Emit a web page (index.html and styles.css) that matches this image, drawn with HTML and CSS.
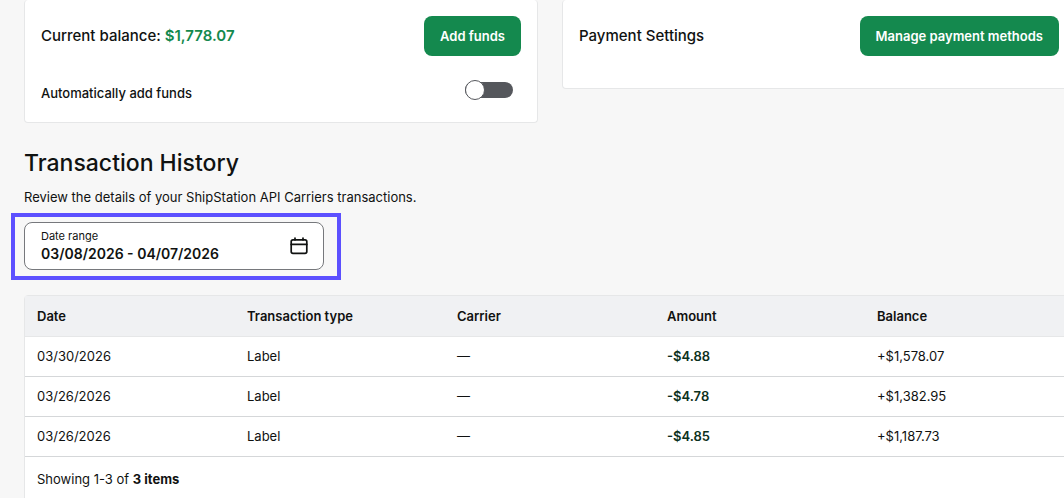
FILE: index.html
```
<!DOCTYPE html>
<html lang="en">
<head>
	<meta charset="UTF-8">
	<meta name="viewport" content="width=device-width, initial-scale=1">
	<title>Transaction History</title>
	<link rel="stylesheet" href="styles.css">
</head>
<body>
	<main class="page">
		<div class="cards">
			<section class="card">
				<div class="card-row">
					<h2 class="card-title">Current balance: <span class="balance">$1,778.07</span></h2>
					<button type="button" class="btn">Add funds</button>
				</div>
				<div class="card-row auto-row">
					<label for="auto-funds" class="auto-label">Automatically add funds</label>
					<input type="checkbox" id="auto-funds" class="switch" role="switch">
				</div>
			</section>
			<section class="card card-payment">
				<div class="card-row">
					<h2 class="card-title">Payment Settings</h2>
					<button type="button" class="btn">Manage payment methods</button>
				</div>
			</section>
		</div>

		<h1 class="title">Transaction History</h1>
		<p class="intro">Review the details of your ShipStation API Carriers transactions.</p>

		<div class="highlight">
			<div class="date-field">
				<div class="date-text">
					<label for="date-range">Date range</label>
					<input type="text" id="date-range" value="03/08/2026 - 04/07/2026">
				</div>
				<button type="button" class="date-btn" aria-label="Open calendar">
					<svg width="18" height="18" viewBox="0 0 18 18" fill="none" stroke="currentColor" stroke-width="1.7" stroke-linecap="round">
						<rect x="1.2" y="2.8" width="15.6" height="13.6" rx="1.8"/>
						<path d="M1.2 7.4h15.6M5 1v1.8M13 1v1.8"/>
					</svg>
				</button>
			</div>
		</div>

		<div class="table-box">
			<table class="history">
				<thead>
					<tr>
						<th>Date</th>
						<th>Transaction type</th>
						<th>Carrier</th>
						<th>Amount</th>
						<th>Balance</th>
					</tr>
				</thead>
				<tbody>
					<tr>
						<td>03/30/2026</td>
						<td>Label</td>
						<td>—</td>
						<td class="amount">-$4.88</td>
						<td>+$1,578.07</td>
					</tr>
					<tr>
						<td>03/26/2026</td>
						<td>Label</td>
						<td>—</td>
						<td class="amount">-$4.78</td>
						<td>+$1,382.95</td>
					</tr>
					<tr>
						<td>03/26/2026</td>
						<td>Label</td>
						<td>—</td>
						<td class="amount">-$4.85</td>
						<td>+$1,187.73</td>
					</tr>
				</tbody>
			</table>
			<p class="showing">Showing 1-3 of <b>3 items</b></p>
		</div>
	</main>
</body>
</html>
```
FILE: styles.css
```
*{
	box-sizing: border-box;
}
body{
	margin: 0;
	background: #f7f7f7;
	color: #101211;
	font: 13px/20px Inter, "Liberation Sans", sans-serif;
	overflow: hidden;
}
h1,h2,p{
	margin: 0;
}
button,input{
	font: inherit;
	color: inherit;
}
/* the content runs a little past the right edge */
.page{
	margin: 0 -12px 0 24px;
}
.cards{
	display: grid;
	grid-template-columns: 1fr 1fr;
	gap: 24px;
	align-items: start;
}
.card{
	padding: 16px 16px 19px;
	background: #fff;
	border: 1px solid #e6e7e8;
	border-top: 0;
	border-radius: 4px;
}
.card-payment{
	padding-bottom: 32px;
}
.card-row{
	display: flex;
	align-items: center;
	justify-content: space-between;
}
.card-title{
	font-size: 15px;
	font-weight: 500;
}
.balance{
	color: #14894e;
	font-weight: 600;
}
.btn{
	height: 40px;
	padding: 0 16px;
	border: 0;
	border-radius: 8px;
	background: #14894e;
	color: #fff;
	font-weight: 600;
}
.auto-row{
	margin-top: 21px;
	padding-right: 8px;
}
.auto-label{
	padding-top: 6px;
	font-weight: 500;
}
.switch{
	appearance: none;
	display: flex;
	align-items: center;
	width: 48px;
	height: 16px;
	margin: 0;
	border-radius: 8px;
	background: #55575c;
}
.switch::before{
	content: "";
	box-sizing: border-box;
	flex: none;
	width: 20px;
	height: 20px;
	border: 1px solid #55575c;
	border-radius: 50%;
	background: #fff;
}
.switch:checked{
	justify-content: flex-end;
	background: #14894e;
}
.title{
	margin-top: 24px;
	font-size: 23px;
	line-height: 32px;
	font-weight: 500;
}
.intro{
	margin-top: 8px;
}
.highlight{
	width: 330px;
	margin: 6px 0 0 -13px;
	padding: 5px 13px 6px 9px;
	border: 4px solid #5c50ff;
}
.date-field{
	display: flex;
	align-items: center;
	justify-content: space-between;
	height: 48px;
	padding: 0 15px 0 16px;
	border: 1px solid #76787c;
	border-radius: 8px;
	background: #fff;
}
.date-text{
	display: flex;
	flex-direction: column;
	flex: 1;
}
.date-text label{
	font-size: 11px;
	line-height: 16px;
}
.date-text input{
	width: 100%;
	height: 20px;
	padding: 0;
	border: 0;
	background: none;
	font-size: 14px;
	font-weight: 600;
	outline: none;
}
.date-btn{
	display: flex;
	padding: 0;
	border: 0;
	background: none;
}
.table-box{
	margin-top: 15px;
	border: 1px solid #e6e7e8;
	border-radius: 4px;
	background: #fff;
}
.history{
	width: 100%;
	table-layout: fixed;
	border-collapse: collapse;
}
.history th,.history td{
	height: 40px;
	padding: 0 12px;
	text-align: left;
	border-bottom: 1px solid #d5d7d9;
}
.history th{
	background: #f0f1f3;
	border-color: #e6e7e8;
	font-weight: 600;
}
.history .amount{
	color: #0c3120;
	font-weight: 600;
}
.showing{
	padding: 12px 12px 16px;
}
.showing b{
	font-weight: 700;
}
```
